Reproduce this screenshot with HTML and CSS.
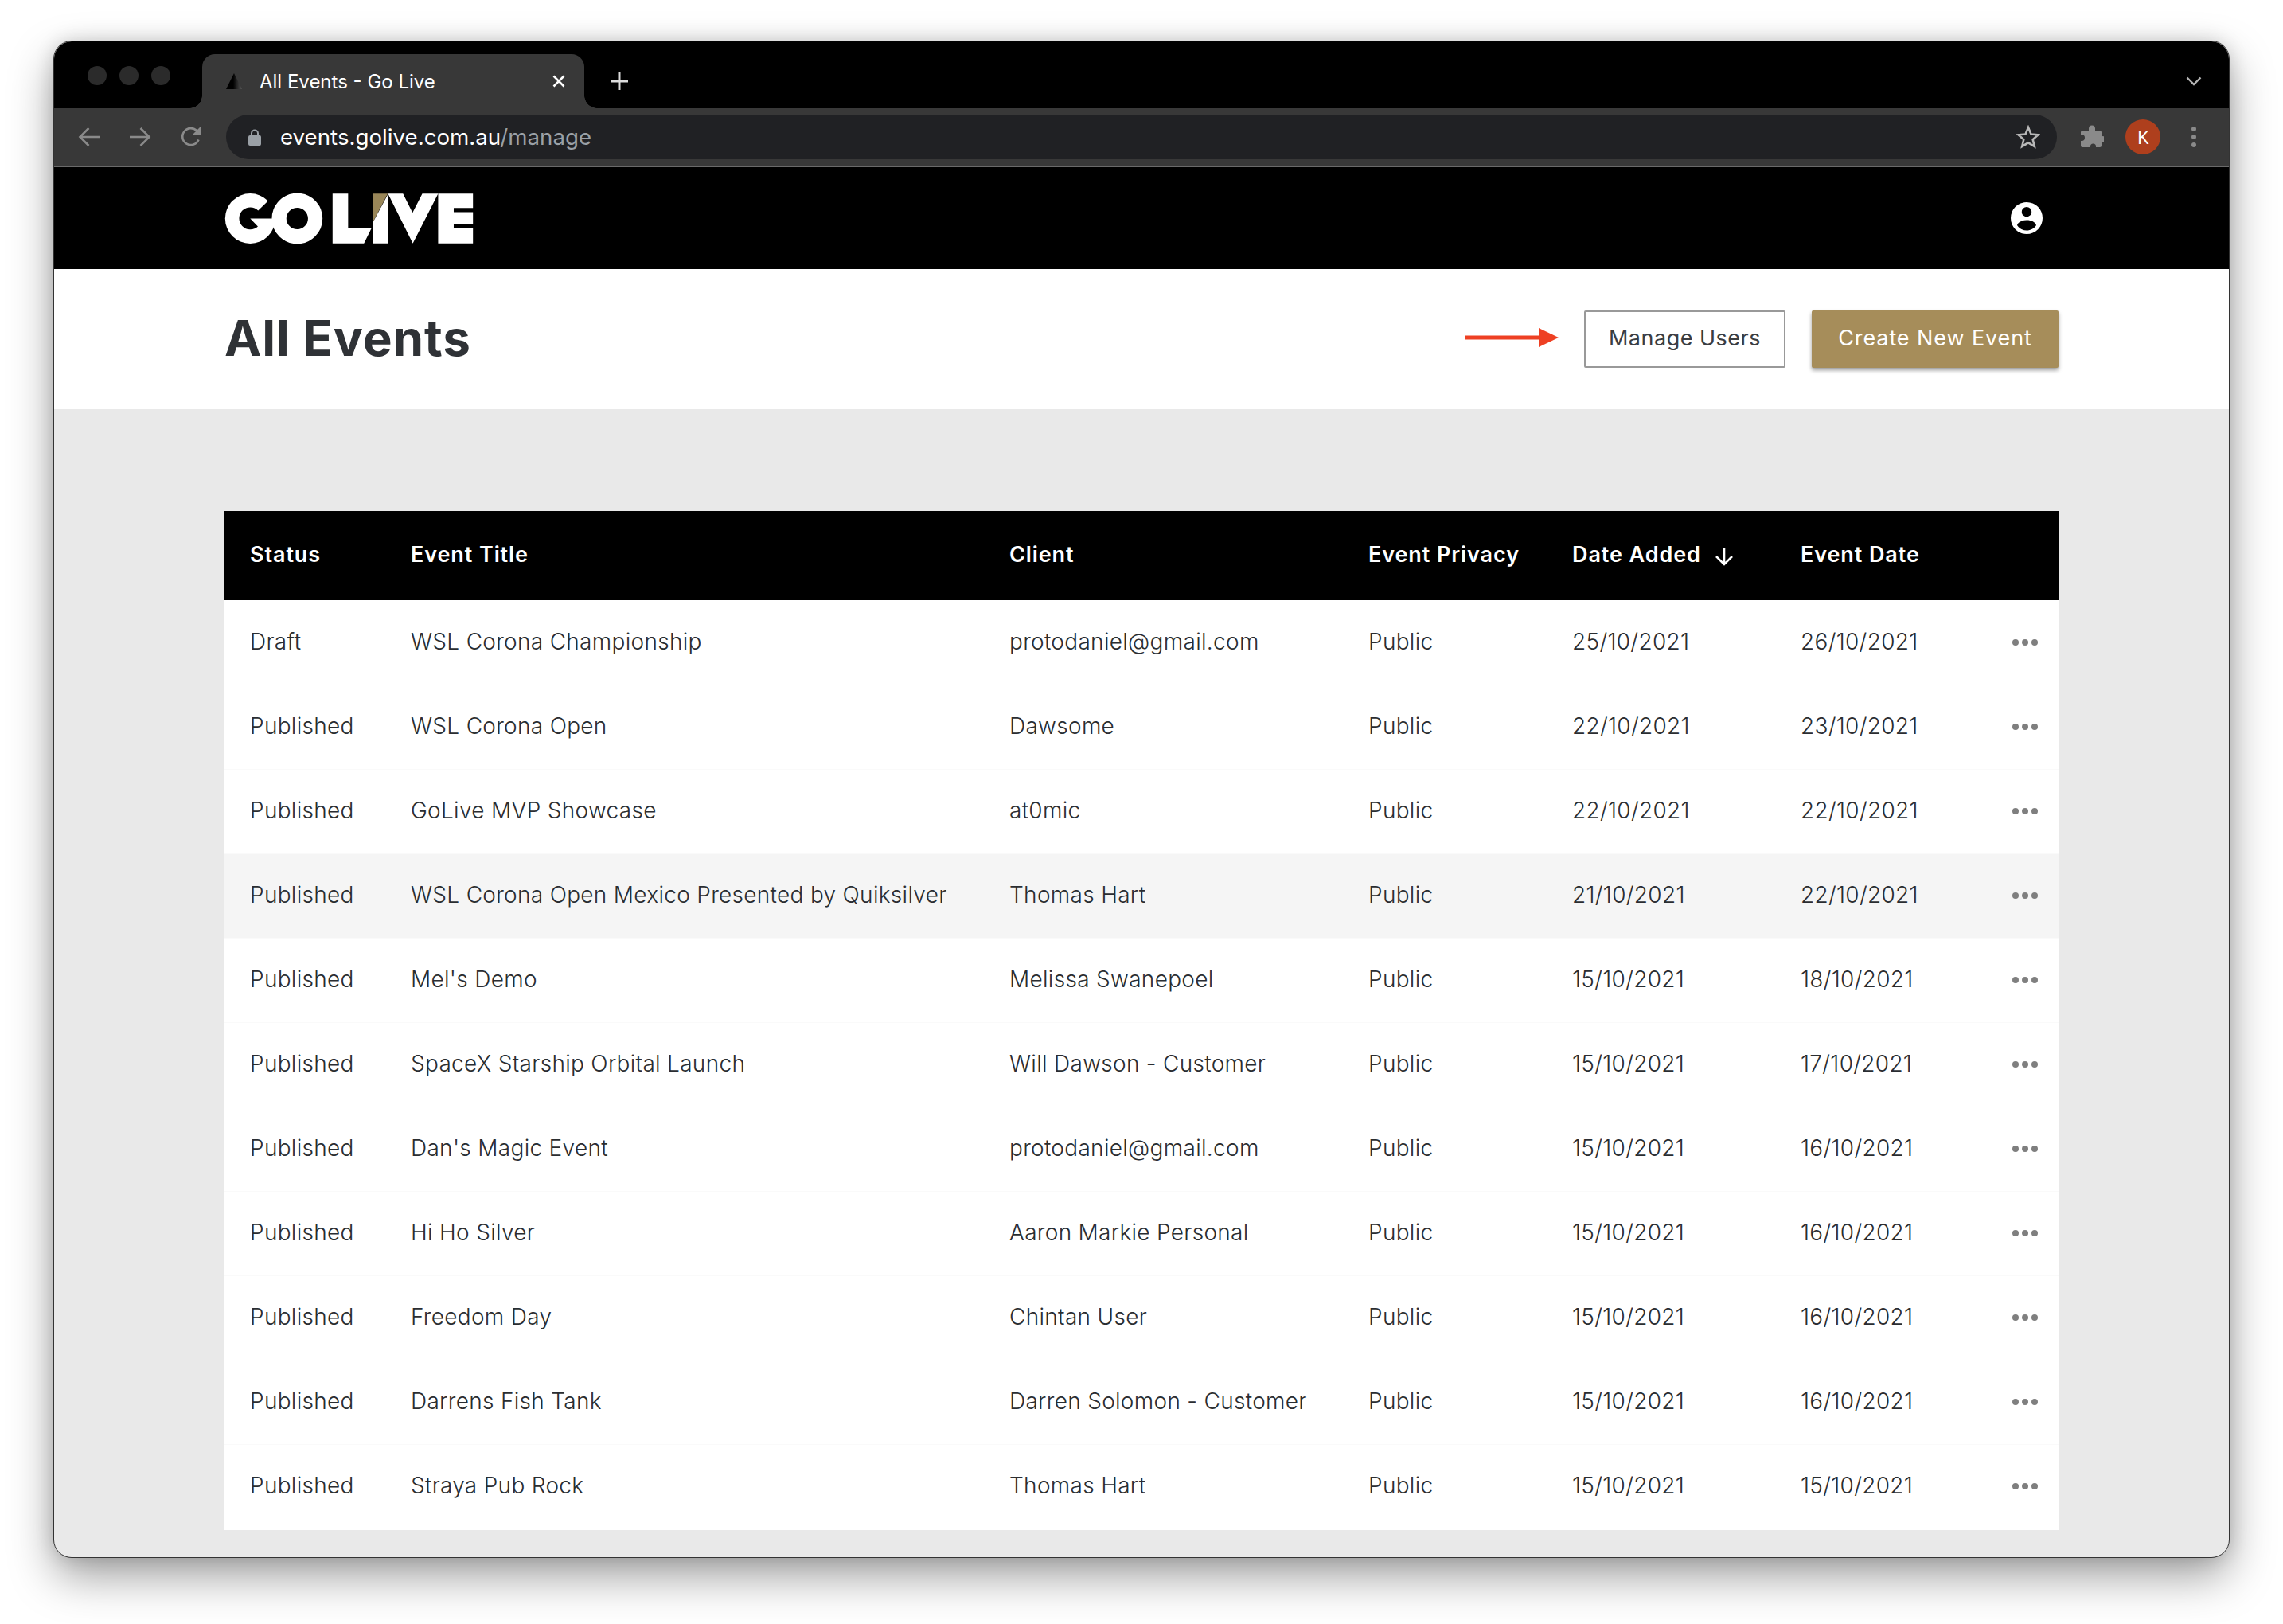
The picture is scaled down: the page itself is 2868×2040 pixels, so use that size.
FILE: index.html
```html
<!DOCTYPE html>
<html lang="en">
<head>
  <meta charset="UTF-8">
  <title>All Events - Go Live</title>
  <link rel="stylesheet" href="styles.css">
</head>
<body>
  <svg class="sprite" width="0" height="0">
    <symbol id="dots" viewBox="0 0 32 8">
      <circle cx="4" cy="4" r="4"/><circle cx="16" cy="4" r="4"/><circle cx="28" cy="4" r="4"/>
    </symbol>
  </svg>

  <div class="window">
    <div class="tabstrip">
      <div class="traffic"><span></span><span></span><span></span></div>
      <div class="tab">
        <svg class="favicon" width="22" height="20" viewBox="0 0 22 20">
          <defs>
            <linearGradient id="fav" x1="0" x2="1" y1="0" y2="0">
              <stop offset="0.45" stop-color="#000"/><stop offset="1" stop-color="#555"/>
            </linearGradient>
          </defs>
          <polygon points="11,0 21,20 1,20" fill="url(#fav)"/>
        </svg>
        <span class="tab-title">All Events - Go Live</span>
        <svg class="tab-close" width="16" height="16" viewBox="0 0 16 16">
          <path d="M1.5 1.500l13 13M14.500 1.500l-13 13" stroke="#fff" stroke-width="2.600" fill="none"/>
        </svg>
      </div>
      <svg class="new-tab" width="24" height="24" viewBox="0 0 24 24">
        <path d="M12 1v22M1 12h22" stroke="#dcdcdc" stroke-width="3" fill="none"/>
      </svg>
      <svg class="tab-menu" width="20" height="12" viewBox="0 0 20 12">
        <path d="M1.5 1.5L10 10l8.5-8.5" stroke="#b4b4b4" stroke-width="2.4" fill="none"/>
      </svg>
    </div>

    <div class="toolbar">
      <div class="nav-icons">
        <svg width="28" height="26" viewBox="0 0 28 26"><path d="M27 13H3M13.500 2L2.500 13l11 11" stroke="#8a8a8a" stroke-width="2.600" fill="none"/></svg>
        <svg width="28" height="26" viewBox="0 0 28 26"><path d="M1 13h24M14.500 2l11 11-11 11" stroke="#8a8a8a" stroke-width="2.600" fill="none"/></svg>
        <svg width="28" height="28" viewBox="0 0 28 28"><path d="M23.500 17.500A10.500 10.500 0 1 1 21.500 6.500" stroke="#8a8a8a" stroke-width="2.600" fill="none"/><polygon points="26,1 26,11.500 15.500,11.500" fill="#8a8a8a"/></svg>
      </div>
      <div class="omnibox">
        <svg class="lock" width="16" height="21" viewBox="0 0 16 21">
          <path d="M4 9V5.500a4 4 0 0 1 8 0V9" stroke="#9aa0a6" stroke-width="2" fill="none"/>
          <rect y="8" width="16" height="13" rx="2" fill="#9aa0a6"/>
        </svg>
        <span class="url">events.golive.com.au<span class="url-path">/manage</span></span>
        <svg class="star" width="30" height="30" viewBox="0 0 30 30">
          <polygon points="15,3 18.500,11.500 27.500,12.300 20.700,18.200 22.800,27 15,22.300 7.200,27 9.300,18.200 2.500,12.300 11.500,11.500" stroke="#b8b8b8" stroke-width="2.600" fill="none"/>
        </svg>
      </div>
      <svg class="puzzle" width="30" height="30" viewBox="0 0 30 30">
        <path d="M11 4.500a4 4 0 0 1 8 0V7h6a2 2 0 0 1 2 2v5h1a4 4 0 0 1 0 8h-1v4a2 2 0 0 1-2 2h-5v-1a3.500 3.500 0 0 0-7 0v1H3a2 2 0 0 1-2-2v-6h1a4 4 0 0 0 0-8H1V9a2 2 0 0 1 2-2h8z" fill="#8a8a8a"/>
      </svg>
      <div class="avatar">K</div>
      <svg class="kebab" width="6" height="26" viewBox="0 0 6 26">
        <circle cx="3" cy="3" r="3"/><circle cx="3" cy="13" r="3"/><circle cx="3" cy="23" r="3"/>
      </svg>
    </div>

    <header class="site-header">
      <svg class="logo" width="314" height="63" viewBox="96 67 942 190">
        <circle cx="191" cy="162" r="95" fill="#fff"/>
        <path fill="#000" d="M191 162L220 192A42 42 0 1 1 221 132L260 94L300 60V162z"/>
        <circle cx="369" cy="162" r="68.500" fill="none" stroke="#fff" stroke-width="55"/>
        <polygon fill="#fff" points="503,68 562,68 562,200 650,200 622,256 503,256"/>
        <polygon fill="#998658" points="656,68 712,68 656,175"/>
        <polygon fill="#fff" points="656,176 713,70 713,256 656,256"/>
        <polygon fill="#fff" points="713,68 770,68 806,140 843,68 903,68 807,256"/>
        <polygon fill="#fff" points="903,68 1035,68 1035,122 962,122 962,138 1035,138 1035,184 962,184 962,200 1035,200 1035,256 903,256"/>
      </svg>
      <svg class="user-icon" width="40" height="40" viewBox="0 0 40 40">
        <path fill="#fff" fill-rule="evenodd" d="M20 0a20 20 0 1 1 0 40a20 20 0 1 1 0-40zM20 6a6.200 6.200 0 1 0 0 12.400a6.200 6.200 0 1 0 0-12.400zM20 22.500c-6 0-11 2.500-12 6.500c2.500 4 7 6.500 12 6.500s9.500-2.500 12-6.500c-1-4-6-6.500-12-6.500z"/>
      </svg>
    </header>

    <div class="title-bar">
      <h1>All Events</h1>
      <div class="actions">
        <svg class="callout" width="118" height="24" viewBox="0 0 118 24">
          <rect y="9.500" width="95" height="5" fill="#ee4023"/>
          <polygon points="93,0 118,12 93,24" fill="#ee4023"/>
        </svg>
        <button class="btn btn-outline">Manage Users</button>
        <button class="btn btn-gold">Create New Event</button>
      </div>
    </div>

    <main class="content">
      <table class="events">
        <colgroup>
          <col class="c-status"><col class="c-title"><col class="c-client"><col class="c-privacy"><col class="c-added"><col class="c-date"><col class="c-more">
        </colgroup>
        <thead>
          <tr>
            <th>Status</th>
            <th>Event Title</th>
            <th>Client</th>
            <th>Event Privacy</th>
            <th>Date Added<svg class="sort" width="24" height="24" viewBox="0 0 24 24"><path d="M12 1v21M2 12l10 10 10-10" stroke="#fff" stroke-width="2.600" fill="none"/></svg></th>
            <th>Event Date</th>
            <th></th>
          </tr>
        </thead>
        <tbody>
          <tr><td>Draft</td><td>WSL Corona Championship</td><td>protodaniel@gmail.com</td><td>Public</td><td>25/10/2021</td><td>26/10/2021</td><td><svg class="more"><use href="#dots"/></svg></td></tr>
          <tr><td>Published</td><td>WSL Corona Open</td><td>Dawsome</td><td>Public</td><td>22/10/2021</td><td>23/10/2021</td><td><svg class="more"><use href="#dots"/></svg></td></tr>
          <tr><td>Published</td><td>GoLive MVP Showcase</td><td>at0mic</td><td>Public</td><td>22/10/2021</td><td>22/10/2021</td><td><svg class="more"><use href="#dots"/></svg></td></tr>
          <tr class="hovered"><td>Published</td><td>WSL Corona Open Mexico Presented by Quiksilver</td><td>Thomas Hart</td><td>Public</td><td>21/10/2021</td><td>22/10/2021</td><td><svg class="more"><use href="#dots"/></svg></td></tr>
          <tr><td>Published</td><td>Mel's Demo</td><td>Melissa Swanepoel</td><td>Public</td><td>15/10/2021</td><td>18/10/2021</td><td><svg class="more"><use href="#dots"/></svg></td></tr>
          <tr><td>Published</td><td>SpaceX Starship Orbital Launch</td><td>Will Dawson - Customer</td><td>Public</td><td>15/10/2021</td><td>17/10/2021</td><td><svg class="more"><use href="#dots"/></svg></td></tr>
          <tr><td>Published</td><td>Dan's Magic Event</td><td>protodaniel@gmail.com</td><td>Public</td><td>15/10/2021</td><td>16/10/2021</td><td><svg class="more"><use href="#dots"/></svg></td></tr>
          <tr><td>Published</td><td>Hi Ho Silver</td><td>Aaron Markie Personal</td><td>Public</td><td>15/10/2021</td><td>16/10/2021</td><td><svg class="more"><use href="#dots"/></svg></td></tr>
          <tr><td>Published</td><td>Freedom Day</td><td>Chintan User</td><td>Public</td><td>15/10/2021</td><td>16/10/2021</td><td><svg class="more"><use href="#dots"/></svg></td></tr>
          <tr><td>Published</td><td>Darrens Fish Tank</td><td>Darren Solomon - Customer</td><td>Public</td><td>15/10/2021</td><td>16/10/2021</td><td><svg class="more"><use href="#dots"/></svg></td></tr>
          <tr><td>Published</td><td>Straya Pub Rock</td><td>Thomas Hart</td><td>Public</td><td>15/10/2021</td><td>15/10/2021</td><td><svg class="more"><use href="#dots"/></svg></td></tr>
        </tbody>
      </table>
    </main>
  </div>
</body>
</html>
```

FILE: styles.css
```css
* {
  box-sizing: border-box;
}

html, body {
  margin: 0;
  height: 100%;
}

body {
  padding: 52px 68px 84px;
  background-color: #fff;
  font-family: Inter, "Liberation Sans", sans-serif;
  overflow: hidden;
}

.sprite {
  display: block;
  height: 0;
}

.window {
  height: 1904px;
  display: flex;
  flex-direction: column;
  background-color: #e9e9e9;
  border-radius: 22px;
  overflow: hidden;
  outline: 1px solid #333;
}

body::before {
  content: "";
  position: absolute;
  left: 68px;
  top: 52px;
  width: 2732px;
  height: 1904px;
  border-radius: 22px;
  box-shadow: 0 24px 56px rgba(0, 0, 0, 0.38), 0 0 24px rgba(0, 0, 0, 0.16);
  z-index: -1;
}

/* browser chrome */
.tabstrip {
  height: 84px;
  flex: none;
  display: flex;
  align-items: flex-end;
  padding-left: 42px;
  padding-right: 34px;
  background-color: #000;
}

.traffic {
  display: flex;
  gap: 16px;
  align-self: flex-start;
  margin-top: 31px;
  width: 144px;
}

.traffic span {
  width: 24px;
  height: 24px;
  border-radius: 50%;
  background-color: #2b2b2b;
}

.tab {
  position: relative;
  width: 480px;
  height: 68px;
  display: flex;
  align-items: center;
  padding: 0 24px 0 29px;
  background-color: #383838;
  border-radius: 16px 16px 0 0;
}

.tab::before,
.tab::after {
  content: "";
  position: absolute;
  bottom: 0;
  width: 16px;
  height: 16px;
}

.tab::before {
  left: -16px;
  background: radial-gradient(circle at 0 0, #000 15.500px, #383838 16px);
}

.tab::after {
  right: -16px;
  background: radial-gradient(circle at 100% 0, #000 15.500px, #383838 16px);
}

.favicon {
  flex: none;
}

.tab-title {
  flex: 1;
  margin-left: 21px;
  font-size: 24px;
  color: #fff;
  white-space: nowrap;
}

.new-tab {
  margin: 0 0 22px 32px;
}

.tab-menu {
  margin: 0 0 28px auto;
}

.toolbar {
  height: 74px;
  flex: none;
  display: flex;
  align-items: flex-start;
  padding-top: 8px;
  background-color: #383838;
  border-bottom: 2px solid #6a6a6a;
}

.nav-icons {
  width: 216px;
  height: 56px;
  display: flex;
  align-items: center;
  gap: 36px;
  padding-left: 30px;
}

.omnibox {
  width: 2300px;
  height: 56px;
  display: flex;
  align-items: center;
  padding: 0 21px 0 28px;
  background-color: #202124;
  border-radius: 28px;
}

.url {
  flex: 1;
  margin-left: 24px;
  font-size: 27.7px;
  color: #fff;
  white-space: nowrap;
}

.url-path {
  color: #9aa0a6;
}

.puzzle {
  margin: 13px 0 0 29px;
}

.avatar {
  width: 44px;
  height: 44px;
  margin: 6px 0 0 27px;
  border-radius: 50%;
  background-color: #ae3f1d;
  color: #fff;
  font-family: "Open Sans", sans-serif;
  font-size: 24px;
  line-height: 44px;
  text-align: center;
}

.kebab {
  margin: 15px 0 0 39px;
  fill: #8a8a8a;
}

/* site header */
.site-header {
  height: 128px;
  flex: none;
  display: flex;
  align-items: center;
  justify-content: space-between;
  padding: 0 234px 0 214px;
  background-color: #000;
}

.title-bar {
  height: 176px;
  flex: none;
  display: flex;
  align-items: center;
  justify-content: space-between;
  padding: 0 214px;
  background-color: #fff;
}

h1 {
  margin: 0;
  padding-bottom: 4px;
  font-size: 62px;
  font-weight: 700;
  color: #2f3236;
  letter-spacing: 0.9px;
}

.actions {
  display: flex;
  align-items: center;
}

.callout {
  margin: 0 32px 4px 0;
}

.btn {
  height: 72px;
  padding: 0 0 3px;
  font-family: inherit;
  border-radius: 2px;
}

.btn-outline {
  width: 253px;
  margin-right: 33px;
  font-size: 27px;
  letter-spacing: 0.5px;
  color: #3a3d42;
  background-color: #fff;
  border: 2px solid #999;
}

.btn-gold {
  width: 310px;
  font-size: 27px;
  letter-spacing: 0.9px;
  color: #fff;
  background-color: #a68d5a;
  border: none;
  box-shadow: 0 3px 5px rgba(0, 0, 0, 0.4);
}

/* events table */
.content {
  flex: 1;
  padding: 128px 214px 0;
}

.events {
  width: 2304px;
  table-layout: fixed;
  border-collapse: collapse;
  background-color: #fff;
}

.c-status { width: 234px; }
.c-title { width: 752px; }
.c-client { width: 451px; }
.c-privacy { width: 256px; }
.c-added { width: 287px; }
.c-date { width: 246px; }
.c-more { width: 78px; }

.events th {
  height: 112px;
  padding: 0 0 3px;
  text-align: left;
  font-size: 27px;
  font-weight: 600;
  letter-spacing: 0.9px;
  color: #fff;
  background-color: #000;
  white-space: nowrap;
}

.events td {
  height: 106px;
  padding: 0 0 2px;
  font-size: 28px;
  font-weight: 300;
  color: #2a2d31;
  letter-spacing: 0.3px;
  border-bottom: 1px solid #fafafa;
  white-space: nowrap;
}

.events th:first-child,
.events td:first-child {
  padding-left: 32px;
}

.events tbody tr:last-child td {
  height: 108px;
  padding-bottom: 4px;
  border-bottom: none;
}

.hovered td {
  background-color: #f5f5f5;
}

.sort {
  vertical-align: -5px;
  margin-left: 17px;
}

.more {
  display: block;
  width: 32px;
  height: 8px;
  margin: 2px 0 0 20px;
  fill: #7f7f7f;
}
```
